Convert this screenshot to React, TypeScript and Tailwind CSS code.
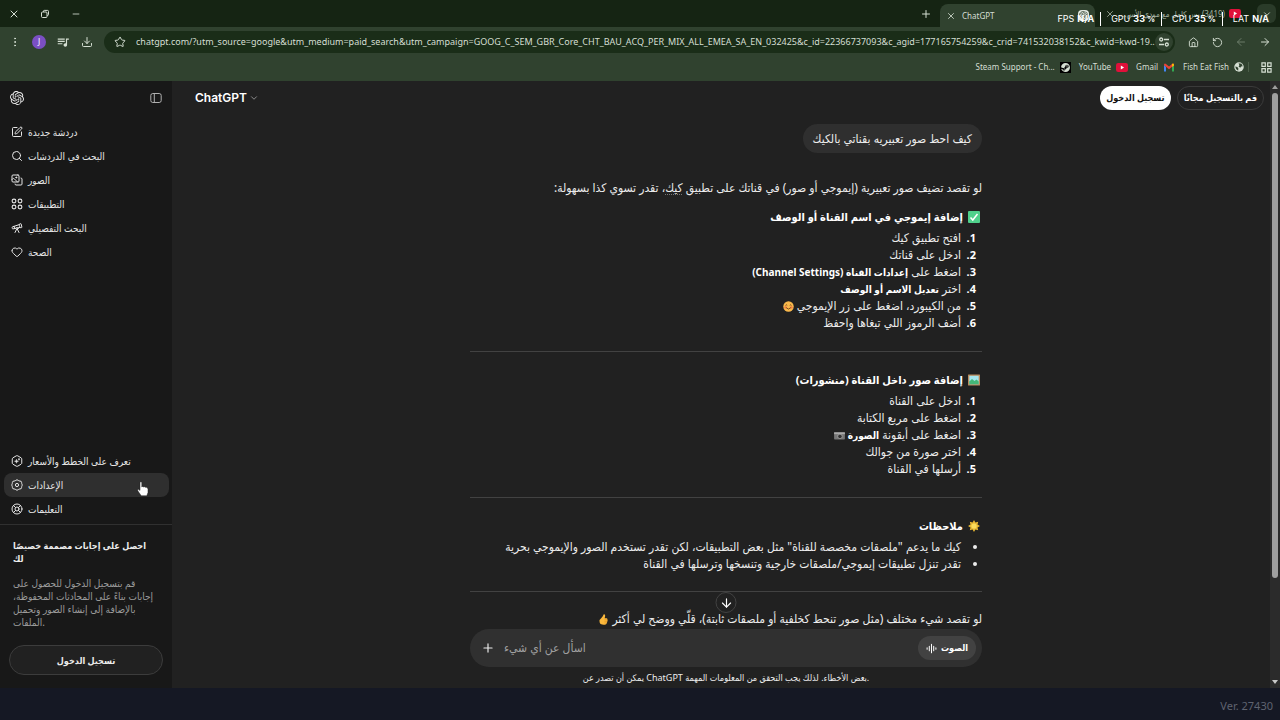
import type { ReactNode } from "react";
import {
  ArrowDown,
  ArrowLeft,
  ArrowRight,
  ChevronDown,
  Download,
  EllipsisVertical,
  Heart,
  House,
  Images,
  LifeBuoy,
  Minus,
  Plus,
  RotateCcw,
  Search,
  SquarePen,
  Star,
  Telescope,
  X,
} from "lucide-react";
import { MdQueueMusic } from "react-icons/md";
import { SiOpenai, SiSteam } from "react-icons/si";

const URL_TEXT =
  "chatgpt.com/?utm_source=google&utm_medium=paid_search&utm_campaign=GOOG_C_SEM_GBR_Core_CHT_BAU_ACQ_PER_MIX_ALL_EMEA_SA_EN_032425&c_id=22366737093&c_agid=177165754259&c_crid=741532038152&c_kwid=kwd-19...";

function RestoreIcon() {
  return (
    <svg viewBox="0 0 10 10" className="size-2.5" fill="none" stroke="currentColor">
      <rect x="1.5" y="3" width="5.5" height="5.5" rx="1" />
      <path d="M3.5 3V2.2a.8.8 0 0 1 .8-.8h3.2a1 1 0 0 1 1 1v3.200a.8.8 0 0 1-.8.8H7" />
    </svg>
  );
}

function YouTubeIcon() {
  return (
    <svg viewBox="0 0 12 9" className="h-[9px] w-3 shrink-0">
      <rect width="12" height="9" rx="2.200" fill="#e0103a" />
      <path d="M4.800 2.600v3.800l3.300-1.900z" fill="#fff" />
    </svg>
  );
}

function GmailIcon() {
  return (
    <svg viewBox="0 0 12 9" className="h-[9px] w-3">
      <path d="M1 1.500V8.500h2V4z" fill="#4285f4" />
      <path d="M11 1.500V8.500H9V4z" fill="#34a853" />
      <path d="M1 2.300V1.500Q1.600 0 3 1L6 3.400 9 1Q10.400 0 11 1.500V2.300L6 6.200z" fill="#ea4335" />
      <path d="M9 1Q10.400 0 11 1.500V2.500L9 4z" fill="#fbbc04" />
    </svg>
  );
}

function GlobeIcon() {
  return (
    <svg viewBox="0 0 12 12" className="size-2.5">
      <circle cx="6" cy="6" r="5.700" fill="#d5dfd3" />
      <path d="M1.500 5.500 4 6l1.200 1.500L5 10.500Q1.800 9.500 1.500 5.500zM5.500 1.500 9 2.200l1.500 3-2 .3-1 1.500L5.500 5.500 6.500 4z" fill="#30422f" />
    </svg>
  );
}

function TuneIcon() {
  return (
    <svg viewBox="0 0 12 12" className="size-3" fill="none" stroke="currentColor" strokeWidth="1.300">
      <circle cx="3.200" cy="3.500" r="1.500" />
      <path d="M6 3.500h5M1 8.500h5" />
      <circle cx="8.800" cy="8.500" r="1.500" />
    </svg>
  );
}

function GridIcon() {
  return (
    <svg viewBox="0 0 12 12" className="size-[11px]" fill="none" stroke="currentColor" strokeWidth="1.300">
      <path d="M1 1h3.700v3.700H1zM7.300 1H11v3.700H7.300zM1 7.300h3.700V11H1zM7.300 7.300H11V11H7.300z" />
    </svg>
  );
}

function PanelIcon() {
  return (
    <svg viewBox="0 0 12 12" className="size-3" fill="none" stroke="currentColor">
      <rect x="0.800" y="1.500" width="10.400" height="9" rx="2" />
      <path d="M4.300 1.500v9" />
    </svg>
  );
}

function AppsIcon() {
  return (
    <svg viewBox="0 0 12 12" className="size-3" fill="none" stroke="currentColor" strokeWidth="1.100">
      <circle cx="3" cy="3" r="1.900" />
      <circle cx="9" cy="3" r="1.900" />
      <circle cx="3" cy="9" r="1.900" />
      <circle cx="9" cy="9" r="1.900" />
    </svg>
  );
}

function PlansIcon() {
  return (
    <svg viewBox="0 0 24 24" className="size-3" fill="none" stroke="currentColor" strokeWidth="2" strokeLinejoin="round">
      <path d="M10.500 1.700q1.500-.8 3 0l6.500 3.800q1.500.9 1.500 2.600v7.800q0 1.700-1.500 2.600l-6.500 3.800q-1.500.8-3 0L4 18.500q-1.500-.9-1.500-2.600V8.100Q2.500 6.400 4 5.500z" />
      <path d="M11 8.500l1 3 3 1-3 1-1 3-1-3-3-1 3-1zM16 6.500l.4 1.600 1.600.4-1.600.4-.4 1.600-.4-1.600-1.600-.4 1.600-.4z" fill="currentColor" strokeWidth="0.900" />
    </svg>
  );
}

function GearIcon() {
  return (
    <svg viewBox="0 0 24 24" className="size-3" fill="none" stroke="currentColor" strokeWidth="2" strokeLinejoin="round">
      <path d="M9.500 2.800Q12 .2 14.500 2.800 15.800 4.200 17.800 4 21.200 4 21.300 7.300 21.200 9 22 10.500q1.200 1.500 0 3-.8 1.500-.7 3.200-.1 3.300-3.500 3.300-2-.2-3.300 1.200-2.500 2.600-5 0Q8.200 19.800 6.200 20 2.800 20 2.700 16.700 2.800 15 2 13.500q-1.200-1.500 0-3 .8-1.500.7-3.200Q2.800 4 6.200 4 8.200 4.200 9.500 2.800z" />
      <circle cx="12" cy="12" r="3.200" />
    </svg>
  );
}

function VoiceIcon() {
  return (
    <svg viewBox="0 0 12 12" className="size-[11px]" fill="none" stroke="currentColor" strokeLinecap="round" strokeWidth="1.100">
      <path d="M1.200 5.200v1.600M3.600 3.500v5M6 1.500v9M8.400 3.500v5M10.800 5.200v1.600" />
    </svg>
  );
}

function HandCursor() {
  return (
    <svg viewBox="0 0 12 16" className="pointer-events-none absolute top-2 right-5 h-4 w-3">
      <path
        d="M3 1.200Q3.900.2 4.800 1.200V6l.8-.6 1 .5.800-.2 1 .6.900-.1q1.700.4 1.700 2v3.300L9.800 14.800H4.200L.8 9.800Q.3 8.600 1.400 8.300L3 9.400z"
        fill="#fff"
        stroke="#222"
        strokeWidth="0.500"
      />
    </svg>
  );
}

function CheckEmoji() {
  return (
    <svg viewBox="0 0 12 12" role="img" className="size-3">
      <rect width="12" height="12" rx="1" fill="#4fd08b" />
      <path d="M2.500 6.500 4.800 9l4.700-6" fill="none" stroke="#fff" strokeWidth="1.500" />
    </svg>
  );
}

function PictureEmoji() {
  return (
    <svg viewBox="0 0 12 12" role="img" className="size-3">
      <rect y="0.500" width="12" height="11" rx="0.500" fill="#b98b5e" />
      <rect x="1.300" y="1.800" width="9.400" height="8.400" fill="#a5e6ee" />
      <path d="M1.300 7.500 4 5l2.500 2 2-1.500 2.200 2v2.700H1.300z" fill="#44b678" />
    </svg>
  );
}

function SunEmoji() {
  return (
    <svg viewBox="0 0 12 12" role="img" className="size-3">
      <path d="M6 0l1.400 2.500L10.200 1.800 9.500 4.600 12 6 9.500 7.400l.7 2.800-2.800-.7L6 12 4.600 9.500l-2.800.7.700-2.800L0 6l2.500-1.400-.7-2.800 2.800.7z" fill="#e9b833" />
      <circle cx="6" cy="6" r="2.600" fill="#fbdc5c" />
    </svg>
  );
}

function SmileEmoji() {
  return (
    <svg viewBox="0 0 12 12" role="img" className="inline size-[11px]">
      <circle cx="6" cy="6" r="5.700" fill="#f9b84b" />
      <circle cx="2.800" cy="7" r="1.300" fill="#f07a45" />
      <circle cx="9.200" cy="7" r="1.300" fill="#f07a45" />
      <path d="M2.800 4.800q.9-1.200 1.800 0M7.400 4.800q.9-1.200 1.800 0M3.500 7.300Q6 10.300 8.500 7.300" fill="none" stroke="#5e3512" strokeWidth="0.900" />
    </svg>
  );
}

function CameraEmoji() {
  return (
    <svg viewBox="0 0 12 10" role="img" className="inline h-[9px] w-[11px]">
      <rect y="1.500" width="12" height="8" rx="0.800" fill="#777" />
      <rect y="1.500" width="12" height="2" fill="#aaa" />
      <circle cx="6.500" cy="6" r="2.500" fill="#333" stroke="#bbb" strokeWidth="0.700" />
    </svg>
  );
}

function ThumbEmoji() {
  return (
    <svg viewBox="0 0 12 12" role="img" className="inline size-[11px]">
      <path d="M6.300.3Q8 .2 7.800 2.300L7.300 4.600H9.500q1.200.5.700 1.700.6.900-.1 1.800.2 1-.6 1.600 0 1.200-1.200 1.700-3 .7-5.500-.6Q1.300 9.500 1.700 6.500 3.500 5 5 2.800z" fill="#fbb83c" />
      <path d="M7 6.300h3M7 8.100h2.900M7 9.800h2.300" stroke="#d98818" strokeWidth="0.500" />
    </svg>
  );
}

function IconButton({ label, children, className = "" }: { label: string; children: ReactNode; className?: string }) {
  return (
    <button type="button" aria-label={label} className={`flex size-6 shrink-0 items-center justify-center ${className}`}>
      {children}
    </button>
  );
}

function Bookmark({ label, icon }: { label: string; icon: ReactNode }) {
  return (
    <a href="#" className="flex items-center gap-[5px]">
      {label}
      {icon}
    </a>
  );
}

function Stat({ name, value, unit }: { name: string; value: string; unit?: string }) {
  return (
    <span className="flex items-baseline gap-[3px] border-l border-white pr-1.5 pl-2.5 first:border-0 last:pr-0">
      {name}
      <b>
        {value}
        {unit && <span className="ml-0.5 text-[8px]">{unit}</span>}
      </b>
    </span>
  );
}

function BrowserChrome() {
  return (
    <header className="relative bg-[#30422f] text-[#d5dfd3]">
      <div className="flex h-[27px] items-center bg-[#152413] pr-1">
        <div className="flex gap-[7px] pl-0.5">
          <IconButton label="Close"><X className="size-3" /></IconButton>
          <IconButton label="Restore"><RestoreIcon /></IconButton>
          <IconButton label="Minimize"><Minus className="size-2.5" /></IconButton>
        </div>
        <div className="flex-1" />
        <IconButton label="New tab"><Plus className="size-3" /></IconButton>
        <div className="mt-1 ml-0.5 flex h-[23px] w-[155px] items-center gap-1.5 rounded-t-lg bg-[#30422f] px-1.5 text-[8px]">
          <X className="size-2.5" />
          <span className="flex-1">ChatGPT</span>
          <span className="rounded-sm bg-[#e4e9e3] p-px text-[#30422f]"><SiOpenai className="size-[9px]" /></span>
        </div>
        <div className="flex w-[162px] items-center gap-1 pr-4 pl-2.5 text-[8px] text-[#a3b0a0]">
          <X className="size-2.5 shrink-0" />
          <span dir="rtl" className="flex-1 whitespace-nowrap">(3419) بس كامل مع مودي الأس...</span>
          <YouTubeIcon />
        </div>
        <button type="button" aria-label="Search tabs" className="flex size-[19px] shrink-0 items-center justify-center rounded-md bg-[#2a3b29]">
          <ChevronDown className="size-2.5" />
        </button>
      </div>
      <div className="flex h-[30px] items-center px-[3px]">
        <IconButton label="Menu"><EllipsisVertical className="size-3" /></IconButton>
        <IconButton label="Profile">
          <span className="flex size-[14px] items-center justify-center rounded-full bg-[#7b4fc4] text-[8px] text-white">J</span>
        </IconButton>
        <IconButton label="Media"><MdQueueMusic className="size-3.5" /></IconButton>
        <IconButton label="Downloads"><Download className="size-3" /></IconButton>
        <div className="mr-1.5 ml-[5px] flex h-[22px] flex-1 items-center rounded-full bg-[#1a2d18] pl-1">
          <IconButton label="Bookmark this page"><Star className="size-3" /></IconButton>
          <input aria-label="Address" readOnly value={URL_TEXT} className="min-w-0 flex-1 bg-transparent pl-1 text-[9px] outline-none" />
          <button type="button" aria-label="Site information" className="mr-0.5 flex size-[18px] items-center justify-center rounded-full bg-[#30422f]">
            <TuneIcon />
          </button>
        </div>
        <IconButton label="Home"><House className="size-[11px]" /></IconButton>
        <IconButton label="Reload"><RotateCcw className="size-[11px]" /></IconButton>
        <IconButton label="Back" className="text-[#6b7b69]"><ArrowLeft className="size-3" /></IconButton>
        <IconButton label="Forward"><ArrowRight className="size-3" /></IconButton>
      </div>
      <nav className="flex h-6 items-center justify-end gap-2 pr-2 pb-1 text-[8px]">
        <Bookmark label="Steam Support - Ch..." icon={<span className="bg-black p-px"><SiSteam className="size-[9px]" /></span>} />
        <Bookmark label="YouTube" icon={<YouTubeIcon />} />
        <Bookmark label="Gmail" icon={<GmailIcon />} />
        <div className="flex items-center gap-1">
          <Bookmark label="Fish Eat Fish" icon={<GlobeIcon />} />
          <span className="h-2.5 w-px bg-[#4b5e49]" />
        </div>
        <button type="button" aria-label="All bookmarks" className="ml-1"><GridIcon /></button>
      </nav>
      <div className="absolute top-3 right-[11px] flex items-center font-[Inter,sans-serif] text-[9px] leading-[14px] text-white">
        <Stat name="FPS" value="N/A" />
        <Stat name="GPU" value="33" unit="%" />
        <Stat name="CPU" value="35" unit="%" />
        <Stat name="LAT" value="N/A" />
      </div>
    </header>
  );
}

function NavItem({ icon, label, active = false, children }: { icon: ReactNode; label: string; active?: boolean; children?: ReactNode }) {
  return (
    <button
      type="button"
      className={`relative flex h-6 w-full items-center gap-[5px] rounded-lg pl-[7px] text-[10px] text-[#e6e6e6] ${active ? "bg-[#2f2f2f]" : ""}`}
    >
      {icon}
      {label}
      {children}
    </button>
  );
}

function Sidebar() {
  return (
    <aside className="flex w-[172px] shrink-0 flex-col bg-[#181818] text-[#ececec]">
      <div className="flex h-[34px] items-center justify-between px-2.5">
        <SiOpenai className="size-3.5" />
        <button type="button" aria-label="Toggle sidebar" className="text-[#b0b0b0]"><PanelIcon /></button>
      </div>
      <nav className="mt-[5px] px-1">
        <NavItem icon={<SquarePen className="size-3" />} label="دردشة جديدة" />
        <NavItem icon={<Search className="size-3" />} label="البحث في الدردشات" />
        <NavItem icon={<Images className="size-3 -scale-x-100" />} label="الصور" />
        <NavItem icon={<AppsIcon />} label="التطبيقات" />
        <NavItem icon={<Telescope className="size-3" />} label="البحث التفصيلي" />
        <NavItem icon={<Heart className="size-3" />} label="الصحة" />
      </nav>
      <div className="flex-1" />
      <nav className="mb-[3px] pr-[3px] pl-1">
        <NavItem icon={<PlansIcon />} label="تعرف على الخطط والأسعار" />
        <NavItem icon={<GearIcon />} label="الإعدادات" active>
          <HandCursor />
        </NavItem>
        <NavItem icon={<LifeBuoy className="size-3" />} label="التعليمات" />
      </nav>
      <section className="border-t border-[#303030] px-[9px] pt-3.5 pb-[13px] text-[10px] leading-[13px]">
        <h2 className="pr-2 pl-1 text-[9px] font-bold">احصل على إجابات مصممة خصيصًا لك</h2>
        <p className="mt-3 pr-2 pl-1 text-[#9b9b9b]">
          قم بتسجيل الدخول للحصول على إجابات بناءً على المحادثات المحفوظة، بالإضافة إلى إنشاء الصور وتحميل الملفات.
        </p>
        <button type="button" className="mt-4 h-[30px] w-full rounded-full border border-[#3c3c3c] bg-[#212121] text-[9px] font-bold">
          تسجيل الدخول
        </button>
      </section>
    </aside>
  );
}

function Heading({ icon, children }: { icon: ReactNode; children: ReactNode }) {
  return (
    <h3 className="mb-0.5 flex items-center gap-[5px] pr-0.5 text-[11px] leading-5 font-bold text-white">
      {icon}
      {children}
    </h3>
  );
}

function Bold({ children }: { children: ReactNode }) {
  return <b className="text-[10px] text-white">{children}</b>;
}

function Steps({ items }: { items: ReactNode[] }) {
  return (
    <ol className="leading-[17px]">
      {items.map((item, i) => (
        <li key={i} className="flex h-[17px]">
          <b className="w-[21px] shrink-0 pr-1.5 text-[11px] text-white">{i + 1}.</b>
          <span>{item}</span>
        </li>
      ))}
    </ol>
  );
}

function Conversation() {
  return (
    <div dir="rtl" className="mx-auto w-full max-w-[512px] flex-1 pt-[9px] text-[12px] text-[#ececec]">
      <p className="w-fit rounded-full bg-[#2f2f2f] px-2.5 leading-[29px]">كيف احط صور تعبيريه بقناتي بالكيك</p>
      <p className="mt-[26px] leading-[18px]">
        لو تقصد تضيف صور تعبيرية (إيموجي أو صور) في قناتك على تطبيق <u className="decoration-[#777] decoration-dotted underline-offset-2">كيك</u>، تقدر تسوي كذا بسهولة:
      </p>
      <div className="mt-2.5">
        <Heading icon={<CheckEmoji />}>إضافة إيموجي في اسم القناة أو الوصف</Heading>
        <Steps
          items={[
            "افتح تطبيق كيك",
            "ادخل على قناتك",
            <>اضغط على <Bold>إعدادات القناة (Channel Settings)</Bold></>,
            <>اختر <Bold>تعديل الاسم أو الوصف</Bold></>,
            <>من الكيبورد، اضغط على زر الإيموجي <SmileEmoji /></>,
            "أضف الرموز اللي تبغاها واحفظ",
          ]}
        />
      </div>
      <hr className="mt-5 mb-[18px] border-[#424242]" />
      <Heading icon={<PictureEmoji />}>إضافة صور داخل القناة (منشورات)</Heading>
      <Steps
        items={[
          "ادخل على القناة",
          "اضغط على مربع الكتابة",
          <>اضغط على أيقونة <Bold>الصورة</Bold> <CameraEmoji /></>,
          "اختر صورة من جوالك",
          "أرسلها في القناة",
        ]}
      />
      <hr className="mt-5 mb-[18px] border-[#424242]" />
      <Heading icon={<SunEmoji />}>ملاحظات</Heading>
      <ul className="leading-[17px]">
        <li className="flex items-center">
          <span className="mr-[5px] ml-3 size-1 rounded-full bg-[#ececec]" />
          كيك ما يدعم "ملصقات مخصصة للقناة" مثل بعض التطبيقات، لكن تقدر تستخدم الصور والإيموجي بحرية
        </li>
        <li className="flex items-center">
          <span className="mr-[5px] ml-3 size-1 rounded-full bg-[#ececec]" />
          تقدر تنزل تطبيقات إيموجي/ملصقات خارجية وتنسخها وترسلها في القناة
        </li>
      </ul>
      <hr className="mt-[19px] mb-[18px] border-[#424242]" />
      <p className="leading-[18px]">
        لو تقصد شيء مختلف (مثل صور تنحط كخلفية أو ملصقات ثابتة)، قلّي ووضح لي أكثر <ThumbEmoji />
      </p>
    </div>
  );
}

function Composer() {
  return (
    <form className="relative mx-auto flex h-[38px] w-full max-w-[512px] items-center rounded-full bg-[#303030] px-1.5">
      <button
        type="button"
        aria-label="Scroll to bottom"
        className="absolute -top-[37px] left-1/2 flex size-[21px] -translate-x-1/2 items-center justify-center rounded-full border border-[#424242] bg-[#212121] text-white"
      >
        <ArrowDown className="size-3.5" />
      </button>
      <IconButton label="Attach"><Plus className="size-3.5" /></IconButton>
      <input aria-label="Message" placeholder="اسأل عن أي شيء" className="min-w-0 flex-1 bg-transparent pl-1 text-[12px] outline-none placeholder:text-[#a0a0a0]" />
      <button type="button" className="flex h-6 items-center gap-1 rounded-full bg-[#424242] px-2 text-[9px] font-bold text-white">
        <VoiceIcon />
        الصوت
      </button>
    </form>
  );
}

function Scrollbar() {
  return (
    <div className="absolute inset-y-0 right-0 flex w-2.5 flex-col items-center bg-[#2b2b2b] py-1">
      <svg viewBox="0 0 6 4" className="h-1 w-1.5"><path d="M3 0l3 4H0z" fill="#9f9f9f" /></svg>
      <div className="mt-1 h-[81%] w-1.5 rounded-full bg-[#9f9f9f]" />
      <div className="flex-1" />
      <svg viewBox="0 0 6 4" className="h-1 w-1.5"><path d="M0 0h6L3 4z" fill="#c8c8c8" /></svg>
    </div>
  );
}

export default function App() {
  return (
    <div className="flex min-h-screen flex-col bg-[#151824] font-['Noto_Sans','DejaVu_Sans_Condensed','DejaVu_Sans',sans-serif]">
      <BrowserChrome />
      <div className="flex flex-1">
        <Sidebar />
        <main className="relative flex min-w-0 flex-1 flex-col bg-[#212121] text-[#ececec]">
          <div className="flex h-[34px] items-center pr-4 pl-[23px]">
            <button type="button" className="flex items-center gap-0.5 font-[Inter,sans-serif] text-[12px] font-semibold text-white">
              ChatGPT
              <ChevronDown className="size-2.5 text-[#a0a0a0]" />
            </button>
            <div className="flex-1" />
            <div className="flex gap-1.5 text-[9px] font-bold">
              <button type="button" className="h-6 rounded-full bg-white px-1.5 text-[#111]">تسجيل الدخول</button>
              <button type="button" className="h-6 rounded-full border border-[#3a3a3a] px-1.5 text-white">قم بالتسجيل مجانًا</button>
            </div>
          </div>
          <Conversation />
          <Composer />
          <p className="pt-1 pb-[3px] text-center text-[9px] leading-[14px]">
            يمكن أن تصدر عن ChatGPT بعض الأخطاء. لذلك يجب التحقق من المعلومات المهمة.
          </p>
          <Scrollbar />
        </main>
      </div>
      <footer className="flex h-8 items-center justify-end pt-1 pr-[7px] text-[11px] text-[#5f6370]">Ver. 27430</footer>
    </div>
  );
}
